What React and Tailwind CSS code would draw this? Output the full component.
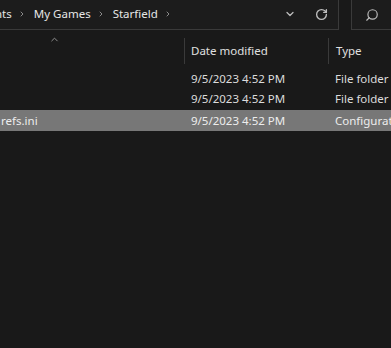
import { ChevronRight, ChevronDown, ChevronUp, RotateCw, Search } from "lucide-react";

const font = { fontFamily: '"Segoe UI", "Noto Sans", "Open Sans", sans-serif' };

function Crumb({ label }) {
  return (
    <div className="flex items-center">
      <span className="text-[11.5px] text-[#e6e6e6]">{label}</span>
      <ChevronRight className="ml-[6px] mr-[8px] h-[8px] w-[8px] text-[#8a8a8a]" strokeWidth={3} />
    </div>
  );
}

const rows = [
  { name: "", date: "9/5/2023 4:52 PM", type: "File folder" },
  { name: "", date: "9/5/2023 4:52 PM", type: "File folder" },
  { name: "refs.ini", date: "9/5/2023 4:52 PM", type: "Configuration settings", selected: true },
];

export default function App() {
  return (
    <div className="h-[348px] w-[391px] overflow-hidden bg-[#191919]" style={font}>
      {/* Address bar */}
      <div className="flex h-[30px]">
        <div className="flex w-[339px] items-center border-b border-r border-[#3a3a3a] bg-[#1c1c1c] pb-[1px]">
          <div className="ml-[-5px] flex items-center">
            <Crumb label="nts" />
            <Crumb label="My Games" />
            <Crumb label="Starfield" />
          </div>
          <ChevronDown className="ml-auto h-[12px] w-[12px] text-[#bdbdbd]" strokeWidth={2.5} />
          <RotateCw className="ml-[19px] mr-[10px] h-[13px] w-[13px] text-[#bdbdbd]" strokeWidth={2.5} />
        </div>
        <div className="w-[12px]" />
        <div className="flex flex-1 items-center border-b border-l border-[#3a3a3a] bg-[#1c1c1c] pl-[13px]">
          <Search className="h-[14px] w-[14px] -scale-x-100 text-[#bdbdbd]" strokeWidth={2} />
        </div>
      </div>

      {/* Column headers */}
      <div className="relative flex h-[34px] items-end">
        <ChevronUp className="absolute left-[49px] top-[4px] h-[11px] w-[11px] text-[#9a9a9a]" strokeWidth={2} />
        <div className="w-[184px]" />
        <div className="flex h-[26px] w-[144px] items-center border-l border-[#3a3a3a] pl-[6px] text-[11.5px] text-[#e0e0e0]">
          Date modified
        </div>
        <div className="flex h-[26px] flex-1 items-center border-l border-[#3a3a3a] pl-[7px] text-[11.5px] text-[#e0e0e0]">
          Type
        </div>
      </div>

      {/* Rows */}
      <div className="mt-[5px] flex flex-col">
        {rows.map((r, i) => (
          <div
            key={i}
            className={`flex items-center whitespace-nowrap text-[11.5px] ${
              r.selected ? "mt-[1px] h-[21px] bg-[#777777] text-[#ededed]" : "h-[20px] text-[#dcdcdc]"
            }`}
          >
            <div className="w-[184px] pl-[1px]">{r.name}</div>
            <div className="w-[144px] pl-[7px]">{r.date}</div>
            <div className="min-w-0 flex-1 overflow-hidden pl-[7px]">{r.type}</div>
          </div>
        ))}
      </div>
    </div>
  );
}
